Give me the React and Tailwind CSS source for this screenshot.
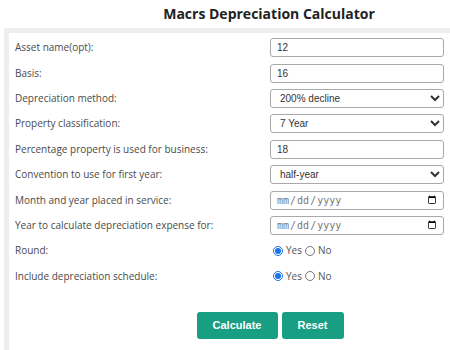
import React from "react";

const rows = [
  { label: "Asset name(opt):", kind: "text", value: "12" },
  { label: "Basis:", kind: "text", value: "16" },
  { label: "Depreciation method:", kind: "select", value: "200% decline", options: ["200% decline", "150% decline", "Straight line"] },
  { label: "Property classification:", kind: "select", value: "7 Year", options: ["3 Year", "5 Year", "7 Year", "10 Year", "15 Year", "20 Year"] },
  { label: "Percentage property is used for business:", kind: "text", value: "18" },
  { label: "Convention to use for first year:", kind: "select", value: "half-year", options: ["half-year", "mid-quarter", "mid-month"] },
  { label: "Month and year placed in service:", kind: "date" },
  { label: "Year to calculate depreciation expense for:", kind: "date" },
  { label: "Round:", kind: "radio", name: "round" },
  { label: "Include depreciation schedule:", kind: "radio", name: "schedule" },
];

const field =
  "w-[174px] h-[19px] rounded-[3px] border border-[#a9a9a9] bg-white text-[10px] text-[#333] outline-none";

function Control({ row }) {
  if (row.kind === "text") {
    return (
      <input
        type="text"
        defaultValue={row.value}
        className={`${field} px-[6px] font-['Liberation_Sans',Arial,sans-serif]`}
      />
    );
  }
  if (row.kind === "select") {
    return (
      <select
        defaultValue={row.value}
        className={`${field} pl-[5px] pr-[2px] font-['Liberation_Sans',Arial,sans-serif]`}
      >
        {row.options.map((o) => (
          <option key={o}>{o}</option>
        ))}
      </select>
    );
  }
  if (row.kind === "date") {
    return (
      <input
        type="date"
        className={`${field} pl-[5px] pr-[4px] text-[8.5px] text-[#777] font-['DejaVu_Sans_Mono',monospace]`}
      />
    );
  }
  return (
    <div className="flex items-center h-[19px] text-[10px] text-[#555] font-['Open_Sans',sans-serif]">
      <input type="radio" name={row.name} defaultChecked className="w-[10px] h-[10px] m-0 ml-[3px] accent-[#1a73e8]" />
      <span className="ml-[3px]">Yes</span>
      <input type="radio" name={row.name} className="w-[10px] h-[10px] m-0 ml-[3px]" />
      <span className="ml-[3px]">No</span>
    </div>
  );
}

export default function App() {
  return (
    <div className="w-[450px] h-[350px] overflow-hidden bg-white">
      <div className="w-[540px] pl-[4px]">
        <h1 className="h-[28px] pt-[4px] pr-[6px] text-center text-[14px] font-bold leading-[20px] text-[#222] font-['Open_Sans',sans-serif]">
          Macrs Depreciation Calculator
        </h1>
        <div className="w-[532px] h-[330px] border-t-[5px] border-l-[5px] border-r-[5px] border-[#eeeeee] bg-white">
          <div className="pt-[2px]">
            {rows.map((row) => (
              <div key={row.label} className="flex items-center h-[25.4px]">
                <div className="w-[261px] pl-[6px] text-[10px] text-[#4a4a4a] font-['Open_Sans',sans-serif]">
                  {row.label}
                </div>
                <Control row={row} />
              </div>
            ))}
          </div>
          <div className="flex justify-center gap-[4px] mt-[23px]">
            <button className="w-[81px] h-[27px] rounded-[3px] bg-[#179e83] text-white text-[11px] font-bold font-['Liberation_Sans',Arial,sans-serif]">
              Calculate
            </button>
            <button className="w-[62px] h-[27px] rounded-[3px] bg-[#179e83] text-white text-[11px] font-bold font-['Liberation_Sans',Arial,sans-serif]">
              Reset
            </button>
          </div>
        </div>
      </div>
    </div>
  );
}
